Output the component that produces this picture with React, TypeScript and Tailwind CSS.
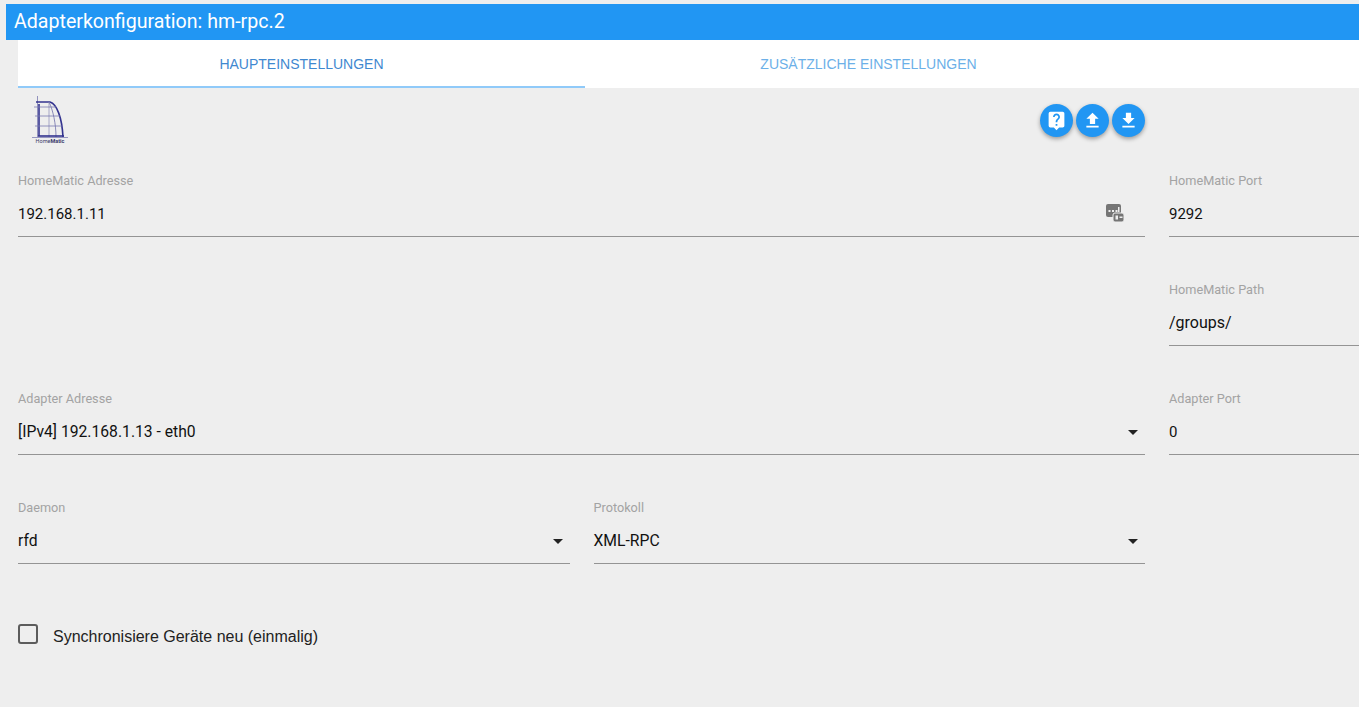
import { MdFileDownload, MdFileUpload, MdLiveHelp } from "react-icons/md";
import type { ReactNode } from "react";

function Field({
  label,
  value,
  arrow,
  icon,
  valueClass = "text-[15px]",
}: {
  label: string;
  value: string;
  arrow?: boolean;
  icon?: ReactNode;
  valueClass?: string;
}) {
  return (
    <div className="flex h-[64px] w-full flex-col border-b border-[#949494]">
      <span className="mt-[1px] h-[14px] text-[12.7px] leading-[14px] text-[#a3a3a3]">
        {label}
      </span>
      <div className="mt-[16px] flex items-center justify-between">
        <span className={`${valueClass} leading-[20px] text-[#111]`}>{value}</span>
        {arrow && (
          <span className="mr-[7px] h-0 w-0 border-x-[5px] border-t-[5px] border-x-transparent border-t-[#222]" />
        )}
        {icon}
      </div>
    </div>
  );
}

function RoundButton({ children }: { children: ReactNode }) {
  return (
    <button
      type="button"
      className="flex size-[33px] items-center justify-center rounded-full bg-[#2196f3] text-[21px] text-white shadow-[0_2px_4px_rgba(0,0,0,0.35)]"
    >
      {children}
    </button>
  );
}

function HomeMaticLogo() {
  return (
    <div className="flex w-[36px] flex-col items-center">
      <svg width="36" height="43" viewBox="0 0 36 43" fill="none">
        <path d="M5.5 0V41" stroke="#7a7ab0" strokeWidth="0.8" />
        <path d="M7 8V40" stroke="#33338f" strokeWidth="1.6" />
        <path d="M4 6H18C25 8 30 22 31 41" stroke="#33338f" strokeWidth="1.6" />
        <path d="M17 6C21 14 24 28 24 41" stroke="#7070aa" strokeWidth="0.8" />
        <path d="M17 6V41" stroke="#8a8ab8" strokeWidth="0.7" />
        <path d="M2 11H24M3 20H28M3 30H30" stroke="#7a7ab0" strokeWidth="0.8" />
        <path d="M0 41.5H36" stroke="#7070aa" strokeWidth="0.7" />
        <path d="M6 40H32" stroke="#33338f" strokeWidth="1.6" />
      </svg>
      <span className="mt-[-1px] text-[5.5px] leading-[6px] text-[#3a3a6c]">
        Home<b>Matic</b>
      </span>
    </div>
  );
}

function IpIcon() {
  return (
    <svg width="18" height="18" viewBox="0 0 18 18" className="mr-[21px] -translate-y-px">
      <rect x="0" y="0" width="15" height="13" rx="2" fill="#757575" />
      <rect x="2.5" y="6" width="2" height="2" fill="#eee" />
      <rect x="6" y="6" width="2" height="2" fill="#eee" />
      <rect x="9.5" y="6" width="2" height="2" fill="#eee" />
      <rect x="12" y="3" width="1.5" height="5" fill="#eee" />
      <rect x="7" y="9" width="11" height="9" rx="2" fill="#757575" stroke="#eee" strokeWidth="1" />
      <rect x="9.5" y="11.5" width="2.5" height="4" fill="#eee" />
      <rect x="13.5" y="12.5" width="3" height="1.5" fill="#eee" />
    </svg>
  );
}

export default function App() {
  return (
    <div className="h-[707px] w-[1359px] overflow-hidden bg-[#eeeeee] pt-[4px] font-['Roboto',sans-serif]">
      <header className="ml-[6px] flex h-[36px] items-center bg-[#2196f3] pl-[8px] text-[19.6px] text-white">
        Adapterkonfiguration: hm-rpc.2
      </header>

      <div className="pl-[18px]">
        <nav className="flex h-[48px] bg-white font-['Liberation_Sans',sans-serif] text-[14px]">
          <div className="flex w-[567px] items-center justify-center border-b-2 border-[#90caf9] pt-[2px] text-[#3f88d0]">
            HAUPTEINSTELLUNGEN
          </div>
          <div className="flex w-[567px] items-center justify-center text-[#6cb0e8]">
            ZUSÄTZLICHE EINSTELLUNGEN
          </div>
        </nav>

        <div className="flex h-[85px] w-[1127px] justify-between">
          <div className="mt-[8px] pl-[14px]">
            <HomeMaticLogo />
          </div>
          <div className="mt-[16px] flex gap-[3px]">
            <RoundButton>
              <MdLiveHelp />
            </RoundButton>
            <RoundButton>
              <MdFileUpload />
            </RoundButton>
            <RoundButton>
              <MdFileDownload />
            </RoundButton>
          </div>
        </div>

        <div className="flex h-[109px] gap-[24px]">
          <div className="w-[1127px] flex-none">
            <Field label="HomeMatic Adresse" value="192.168.1.11" icon={<IpIcon />} />
          </div>
          <div className="w-[200px] flex-none">
            <Field label="HomeMatic Port" value="9292" />
          </div>
        </div>

        <div className="flex h-[109px] gap-[24px]">
          <div className="w-[1127px] flex-none" />
          <div className="w-[200px] flex-none">
            <Field label="HomeMatic Path" value="/groups/" valueClass="text-[16px]" />
          </div>
        </div>

        <div className="flex h-[109px] gap-[24px]">
          <div className="w-[1127px] flex-none">
            <Field
              label="Adapter Adresse"
              value="[IPv4] 192.168.1.13 - eth0"
              valueClass="text-[15.7px]"
              arrow
            />
          </div>
          <div className="w-[200px] flex-none">
            <Field label="Adapter Port" value="0" />
          </div>
        </div>

        <div className="flex h-[109px] w-[1127px] gap-[24px]">
          <div className="flex-1">
            <Field label="Daemon" value="rfd" valueClass="text-[15.7px]" arrow />
          </div>
          <div className="flex-1">
            <Field label="Protokoll" value="XML-RPC" valueClass="text-[15.7px]" arrow />
          </div>
        </div>

        <label className="flex items-center pt-[16px] font-['Liberation_Sans',sans-serif] text-[16px] text-[#222]">
          <span className="-mt-[6px] size-[20px] rounded-[3px] border-2 border-[#5c5c5c]" />
          <span className="ml-[15px]">Synchronisiere Geräte neu (einmalig)</span>
        </label>
      </div>
    </div>
  );
}
